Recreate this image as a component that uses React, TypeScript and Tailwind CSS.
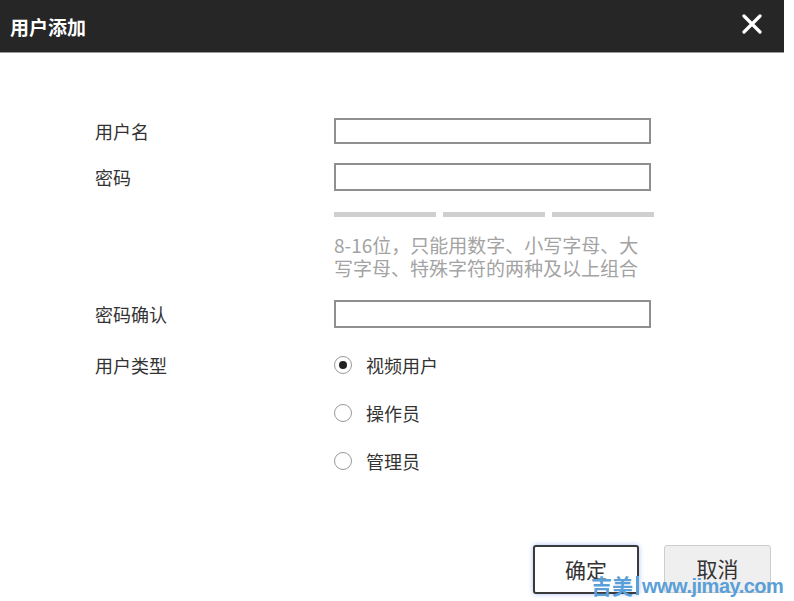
const font = { fontFamily: '"Noto Sans CJK SC", "Noto Sans", sans-serif' };

function Field({ label, tall }: { label: string; tall?: boolean }) {
	return (
		<div className="flex items-center">
			<span className="w-[239px] text-[18px] leading-none text-[#333]">{label}</span>
			<div
				className={
					tall
						? "h-[28px] w-[317px] border-2 border-[#8f8f8f] bg-white"
						: "h-[26px] w-[317px] border-2 border-[#8f8f8f] bg-white"
				}
			/>
		</div>
	);
}

function Radio({ label, checked }: { label: string; checked?: boolean }) {
	return (
		<div className="flex h-[24px] items-center">
			<span className="flex h-[18px] w-[18px] items-center justify-center rounded-full border-[1.5px] border-[#999] bg-white">
				{checked ? <span className="h-[8px] w-[8px] rounded-full bg-[#222]" /> : null}
			</span>
			<span className="ml-[14px] text-[18px] leading-none text-[#333]">{label}</span>
		</div>
	);
}

export default function App() {
	return (
		<div className="relative h-[601px] w-[794px] overflow-hidden bg-white" style={font}>
			<header className="flex h-[53px] w-[784px] items-center justify-between border-b border-[#9a9a9a] bg-[#262626] pl-[10px] pr-[22px]">
				<h1 className="text-[19px] font-bold leading-none text-white">用户添加</h1>
				<svg width="20" height="20" viewBox="0 0 20 20" className="mb-[4px]">
					<path d="M2 2 L18 18 M18 2 L2 18" stroke="#fff" strokeWidth="3.2" strokeLinecap="round" />
				</svg>
			</header>

			<div className="flex flex-col pl-[95px] pt-[65px]">
				<Field label="用户名" />
				<div className="mt-[19px]">
					<Field label="密码" tall />
				</div>
				<div className="ml-[239px] mt-[21px] flex gap-[7px]">
					<div className="h-[5px] w-[102px] bg-[#cfcfcf]" />
					<div className="h-[5px] w-[102px] bg-[#cfcfcf]" />
					<div className="h-[5px] w-[102px] bg-[#cfcfcf]" />
				</div>
				<p className="ml-[239px] mt-[16px] text-[19px] leading-[23px] text-[#a3a3a3]">
					8-16位，只能用数字、小写字母、大
					<br />
					写字母、特殊字符的两种及以上组合
				</p>
				<div className="mt-[21px]">
					<Field label="密码确认" tall />
				</div>
				<div className="mt-[25px] flex">
					<span className="flex h-[24px] w-[239px] items-center text-[18px] leading-none text-[#333]">用户类型</span>
					<div className="flex flex-col gap-[24px]">
						<Radio label="视频用户" checked />
						<Radio label="操作员" />
						<Radio label="管理员" />
					</div>
				</div>
			</div>

			<div className="mt-[72px] flex justify-end gap-[25px] pr-[23px]">
				<button className="h-[49px] w-[106px] rounded-[3px] border-2 border-[#3a3a3a] bg-white text-[21px] text-[#333] shadow-[0_0_5px_#a9bfff]">
					确定
				</button>
				<button className="h-[48px] w-[107px] rounded-[3px] border border-[#cdcdcd] bg-[#efefef] text-[21px] text-[#333]">
					取消
				</button>
			</div>

			<div className="absolute left-[591px] top-[575px] flex items-center text-[21px] font-bold leading-none text-[#5a9fd8]">
				<span>吉美</span>
				<span className="mx-[3px] h-[19px] w-[3px] bg-[#5a9fd8]" />
				<span className="text-[20px] tracking-[-0.5px]" style={{ fontFamily: '"Liberation Sans", sans-serif' }}>
					www.jimay.com
				</span>
			</div>
		</div>
	);
}
